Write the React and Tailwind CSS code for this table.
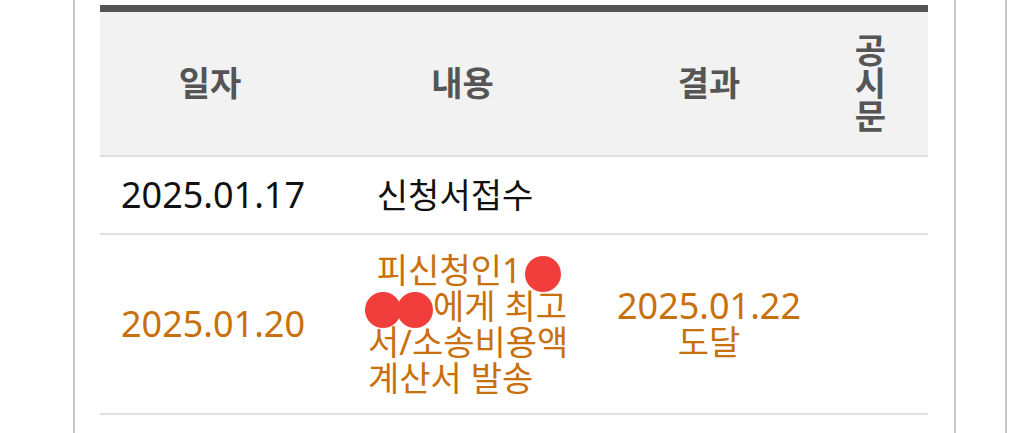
import React from 'react'

const Redaction = ({ className = '' }) => (
    <span className={`inline-block w-[36px] h-[36px] -my-[4px] align-middle rounded-full bg-[#f23d3d] ${className}`} />
)

const rows = [
    {
        date: '2025.01.17',
        content: [<>{'\u00a0'}신청서접수</>],
        result: [],
        tone: 'text-[#111111]',
        pad: 'py-[20px]',
    },
    {
        date: '2025.01.20',
        content: [
            <>{'\u00a0'}피신청인1 <Redaction className="-ml-[5px]" /></>,
            <><span className="-ml-[3px] mr-[-4px]"><Redaction /></span><Redaction />에게 최고</>,
            <>서/소송비용액</>,
            <>계산서 발송</>,
        ],
        result: ['2025.01.22', '도달'],
        tone: 'text-[#c8700c]',
        pad: 'py-[17px]',
    },
]

const App = () => {

    return (
        <div className="w-[1025px] h-[433px] bg-white flex overflow-hidden" style={{ fontFamily: '"Noto Sans", "Noto Sans CJK KR", sans-serif' }}>
            <div className="w-[73px] shrink-0" />

            <div className="w-[883px] shrink-0 border-x-2 border-[#c8c8c8] pl-[25px] pr-[26px] pt-[5px]">
                <div className="w-[828px]">

                    {/* header */}
                    <div className="grid grid-cols-[220px_285px_208px_115px] h-[152px] bg-[#f2f2f2] border-t-[7px] border-[#555555] border-b-2 border-b-[#dddddd] text-[#555555] font-bold text-[34px] leading-[33px]">
                        <div className="flex items-center justify-center">일자</div>
                        <div className="flex items-center justify-center">내용</div>
                        <div className="flex items-center justify-center">결과</div>
                        <div className="flex items-center justify-center">
                            <p className="w-[36px] text-center">공시문</p>
                        </div>
                    </div>

                    {rows.map((row, i) => (
                        <div key={i} className={`grid grid-cols-[220px_285px_208px_115px] border-b-2 border-[#e0e0e0] text-[34px] leading-[36px] ${row.tone}`}>
                            <div className={`flex items-center justify-center pl-[6px] ${row.pad}`}>
                                <span className="text-[36px]">{row.date}</span>
                            </div>
                            <div className={`flex items-center pl-[48px] ${row.pad}`}>
                                <p>
                                    {row.content.map((line, j) => (
                                        <span key={j} className="block whitespace-nowrap">{line}</span>
                                    ))}
                                </p>
                            </div>
                            <div className={`flex flex-col items-center justify-center ${row.pad}`}>
                                {row.result.map((line, j) => (
                                    <span key={j} className={j === 0 ? 'text-[36px]' : ''}>{line}</span>
                                ))}
                            </div>
                            <div />
                        </div>
                    ))}

                </div>
            </div>

            <div className="w-[49px] shrink-0" />
            <div className="flex-1 border-l-2 border-[#c8c8c8]" />
        </div>
    )
}

export default App
